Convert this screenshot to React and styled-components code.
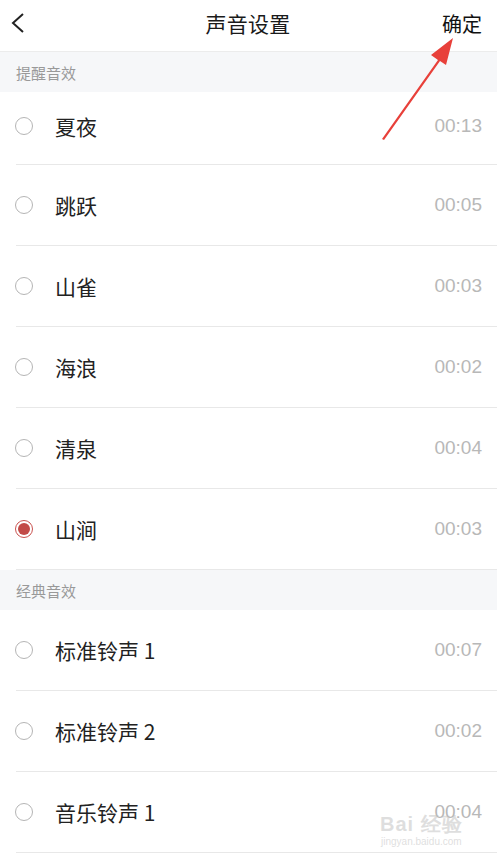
import React from "react";
import styled, { createGlobalStyle } from "styled-components";

const Global = createGlobalStyle`
  html, body { margin: 0; padding: 0; background: #fff; }
  body { font-family: "Noto Sans CJK SC", "Noto Sans", sans-serif; }
`;

const Page = styled.div`
  position: relative;
  width: 497px;
  height: 860px;
  overflow: hidden;
  background: #fff;
`;

const Header = styled.div`
  height: 52px;
  box-sizing: border-box;
  border-bottom: 1px solid #ececec;
  display: grid;
  grid-template-columns: 80px 1fr 80px;
  align-items: center;
  padding: 0 15px 5px 10px;
`;

const Back = styled.div`
  display: flex;
  align-items: center;
`;

const Title = styled.div`
  text-align: center;
  font-size: 21px;
  color: #1a1a1a;
  letter-spacing: 0.3px;
  padding-left: 4px;
`;

const Confirm = styled.div`
  text-align: right;
  font-size: 20px;
  color: #111;
`;

const Section = styled.div`
  height: 40px;
  background: #f6f7f9;
  display: flex;
  align-items: center;
  padding-left: 16px;
  font-size: 15px;
  color: #999;
`;

const Row = styled.div`
  height: ${(p) => (p.$short ? 73 : 81)}px;
  box-sizing: border-box;
  margin-left: 16px;
  border-bottom: 1px solid #e8e8e8;
  display: flex;
  align-items: center;
  padding-right: 15px;
  padding-bottom: ${(p) => (p.$short ? 5 : 0)}px;
`;

const Radio = styled.div`
  width: 18px;
  height: 18px;
  border-radius: 50%;
  box-sizing: border-box;
  border: ${(p) => (p.$on ? "1.5px solid #c9524f" : "1px solid #b5b5b5")};
  display: flex;
  align-items: center;
  justify-content: center;
  margin-left: -1px;
  margin-right: 22px;
  &::after {
    content: "";
    display: ${(p) => (p.$on ? "block" : "none")};
    width: 12px;
    height: 12px;
    border-radius: 50%;
    background: #c24a47;
  }
`;

const Name = styled.div`
  flex: 1;
  font-size: 21px;
  color: #222;
`;

const Time = styled.div`
  font-family: "Liberation Sans", "Noto Sans", sans-serif;
  font-size: 19px;
  color: #b8b8b8;
`;

const Arrow = styled.svg`
  position: absolute;
  left: 0;
  top: 0;
  pointer-events: none;
`;

const Watermark = styled.div`
  position: absolute;
  left: 380px;
  top: 814px;
  color: rgba(190, 190, 190, 0.5);
  font-family: "Liberation Sans", sans-serif;
  line-height: 1;
  text-align: center;
`;

const WmBig = styled.div`
  font-size: 20px;
  font-weight: bold;
  letter-spacing: 1px;
`;

const WmSmall = styled.div`
  font-size: 10px;
  margin-top: 3px;
`;

const group1 = [
  ["夏夜", "00:13"],
  ["跳跃", "00:05"],
  ["山雀", "00:03"],
  ["海浪", "00:02"],
  ["清泉", "00:04"],
  ["山涧", "00:03", true],
];
const group2 = [
  ["标准铃声 1", "00:07"],
  ["标准铃声 2", "00:02"],
  ["音乐铃声 1", "00:04"],
];

export default function App() {
  return (
    <Page>
      <Global />
      <Header>
        <Back>
          <svg width="16" height="22" viewBox="0 0 16 22">
            <path d="M13 2 L3 11 L13 20" fill="none" stroke="#222" strokeWidth="2" />
          </svg>
        </Back>
        <Title>声音设置</Title>
        <Confirm>确定</Confirm>
      </Header>
      <Section>提醒音效</Section>
      {group1.map(([n, t, on], i) => (
        <Row key={n} $short={i === 0}>
          <Radio $on={on} />
          <Name>{n}</Name>
          <Time>{t}</Time>
        </Row>
      ))}
      <Section>经典音效</Section>
      {group2.map(([n, t]) => (
        <Row key={n}>
          <Radio />
          <Name>{n}</Name>
          <Time>{t}</Time>
        </Row>
      ))}
      <Watermark>
        <WmBig>Bai 经验</WmBig>
        <WmSmall>jingyan.baidu.com</WmSmall>
      </Watermark>
      <Arrow width="497" height="860">
        <path d="M382 139 L438 60 L431 55 L453 38 L446 65 L440 61 L384 140 Z" fill="#e8403a" />
      </Arrow>
    </Page>
  );
}
